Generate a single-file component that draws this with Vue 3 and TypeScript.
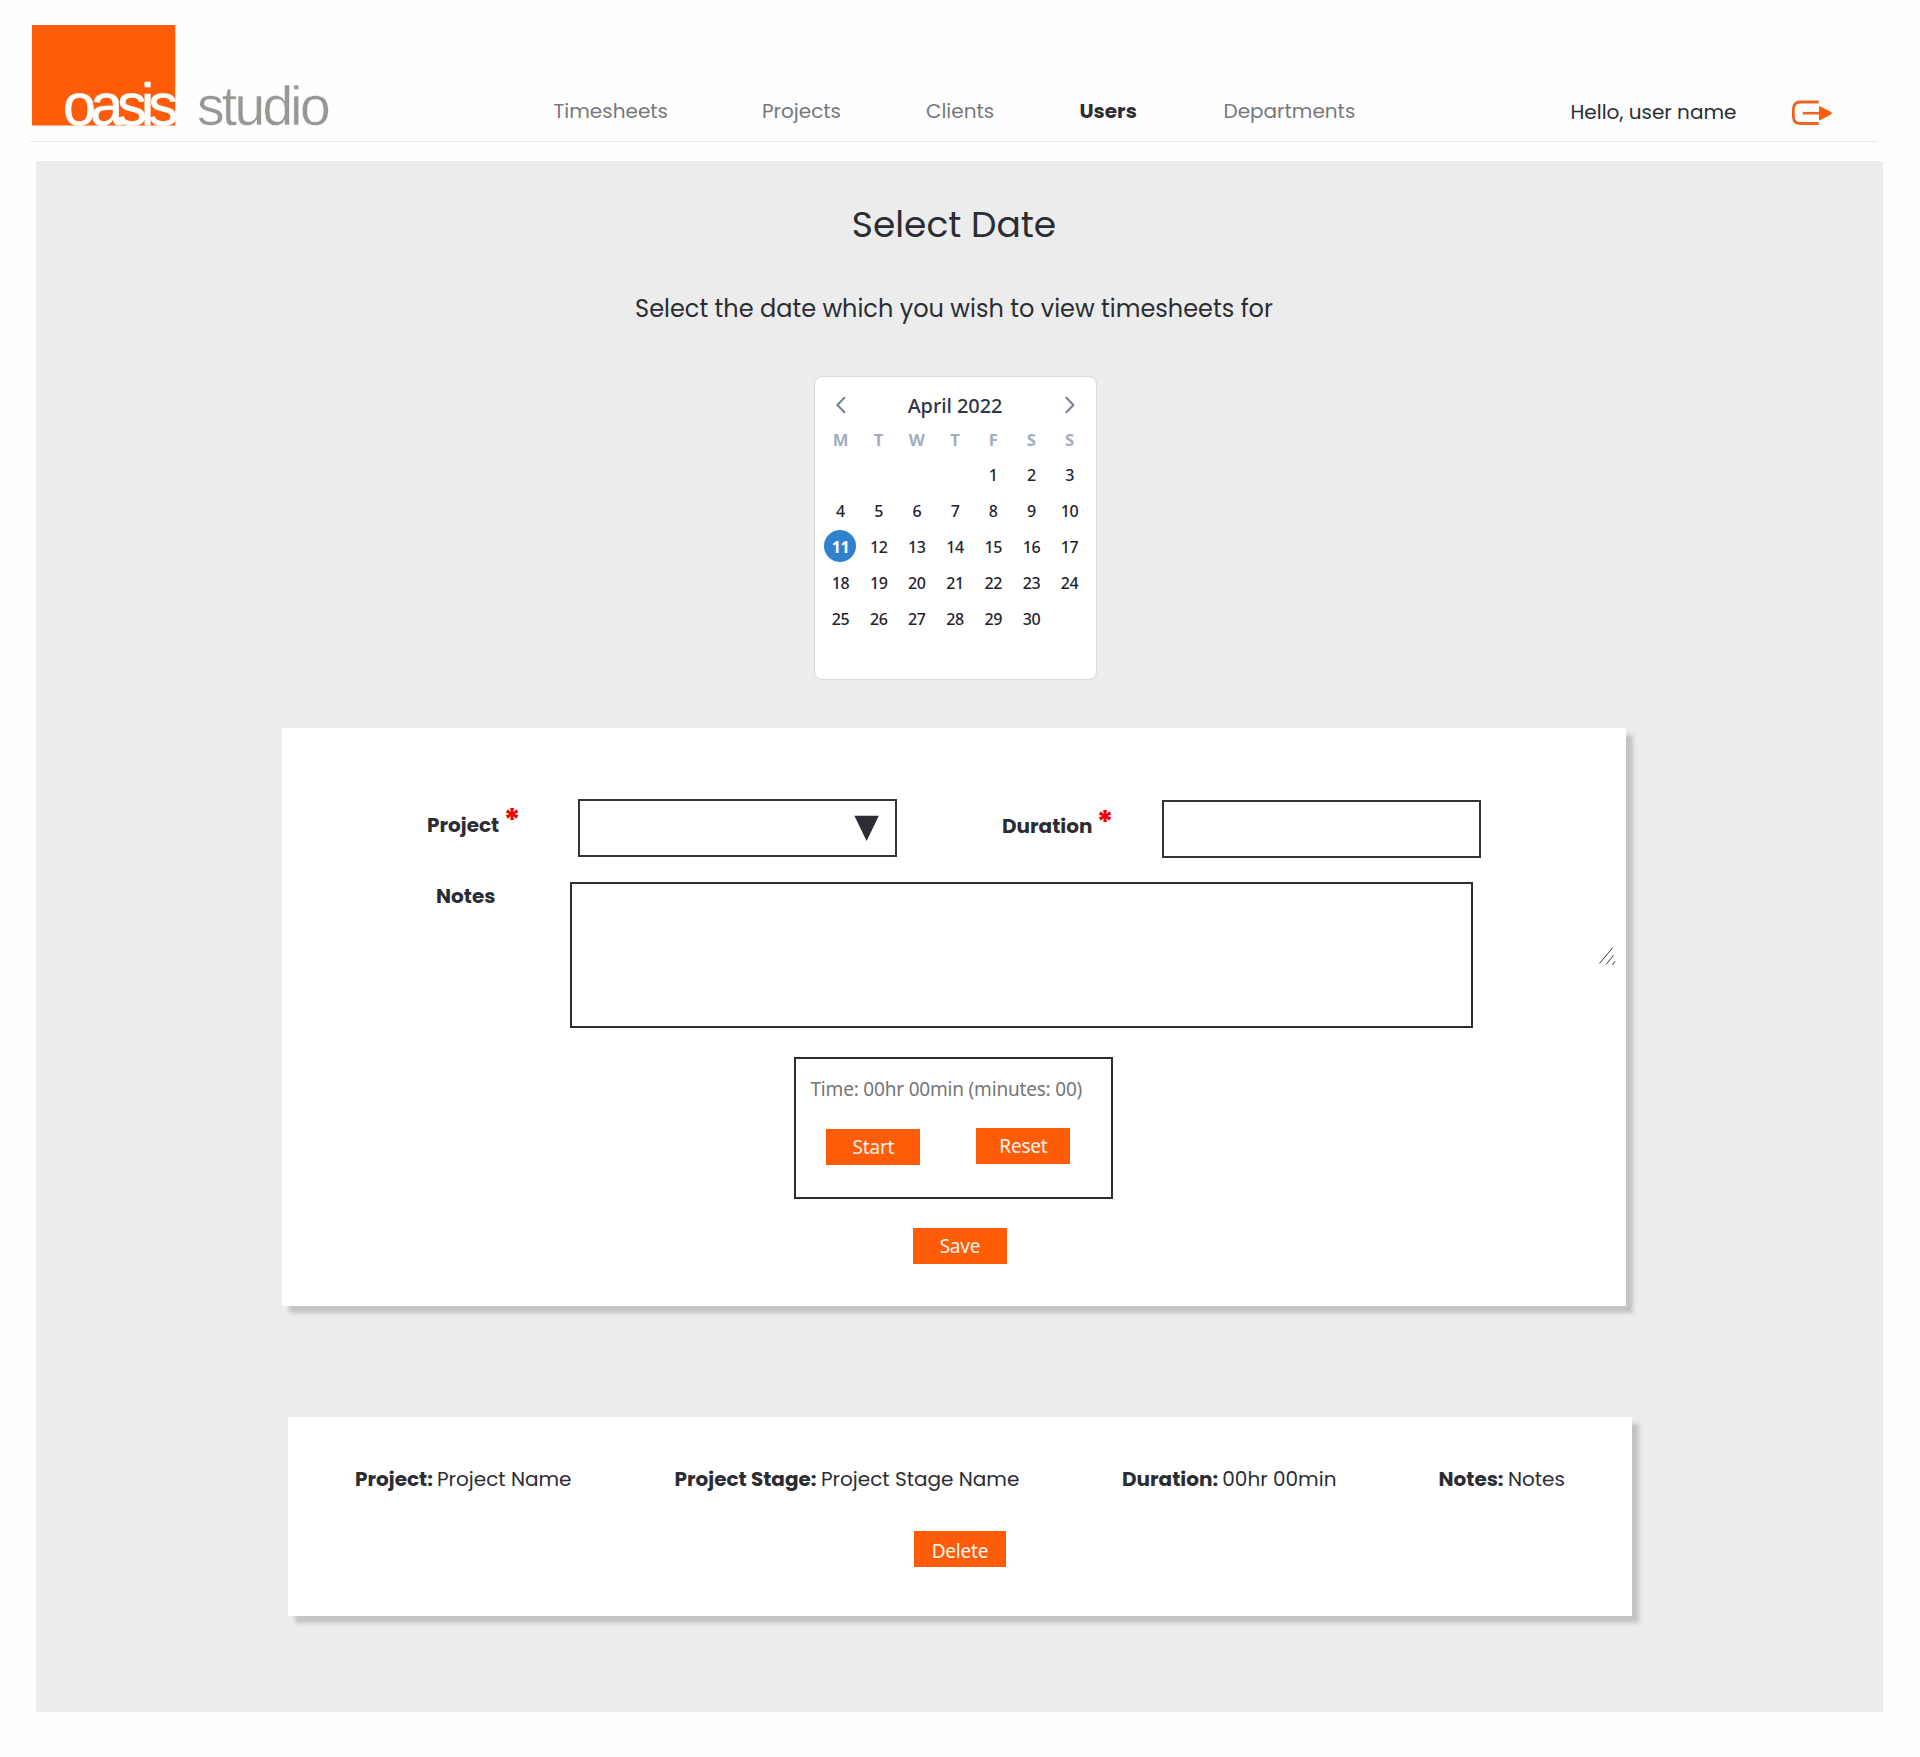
<script setup lang="ts">
interface NavItem { label: string; key: string; active?: boolean }
interface EntryField { name: string; value: string; key: string }

const nav: NavItem[] = [
  { label: 'Timesheets', key: 'timesheets' },
  { label: 'Projects', key: 'projects' },
  { label: 'Clients', key: 'clients' },
  { label: 'Users', key: 'users', active: true },
  { label: 'Departments', key: 'departments' },
]

const weekdays = ['M', 'T', 'W', 'T', 'F', 'S', 'S']
const selectedDay = 11
const leadingBlanks = 4
const days: (number | null)[] = [
  ...Array<null>(leadingBlanks).fill(null),
  ...Array.from({ length: 30 }, (_, i) => i + 1),
]

const entry: EntryField[] = [
  { name: 'Project:', value: 'Project Name', key: 'project' },
  { name: 'Project Stage:', value: 'Project Stage Name', key: 'stage' },
  { name: 'Duration:', value: '00hr 00min', key: 'duration' },
  { name: 'Notes:', value: 'Notes', key: 'notes' },
]
</script>

<template>
  <div class="page">
    <header class="header">
      <svg class="logo" width="310" height="141" viewBox="30 0 310 141">
        <rect x="32" y="25" width="143.3" height="100.5" fill="#ff5c0a" />
        <text class="logo-oasis" x="63" y="125.4" textLength="115" lengthAdjust="spacing">oasis</text>
        <text class="logo-studio" x="197" y="125.4" textLength="133.5" lengthAdjust="spacing">studio</text>
      </svg>
      <nav class="nav">
        <a v-for="n in nav" :key="n.key" class="nav-link" :class="{ active: n.active }">{{ n.label }}</a>
      </nav>
      <span class="hello">Hello, user name</span>
      <svg class="logout" width="44" height="30" viewBox="0 0 44 30">
        <path d="M28.8 4H10.5Q3.4 4 3.4 11.1V18.4Q3.4 25.5 10.5 25.5H28.8" fill="none" stroke="#ee6420" stroke-width="2.8" />
        <path d="M12.8 15.2H30" stroke="#ee6420" stroke-width="2.6" />
        <path d="M29.5 8.6L41 14.4Q41.8 15.2 41 16L29.5 22Z" fill="#ff5c0a" stroke="#ff5c0a" stroke-width="1" stroke-linejoin="round" />
      </svg>
    </header>

    <main class="panel">
      <div class="content">
        <h1 class="title">Select Date</h1>
        <p class="subtitle">Select the date which you wish to view timesheets for</p>

        <section class="calendar">
          <div class="cal-head">
            <svg width="12" height="18" viewBox="0 0 12 18"><path d="M9.4 1.8L2.4 9L9.4 16.2" /></svg>
            <span class="cal-title">April 2022</span>
            <svg width="12" height="18" viewBox="0 0 12 18"><path d="M2.4 1.8L9.4 9L2.4 16.2" /></svg>
          </div>
          <div class="cal-grid weekdays">
            <span v-for="(w, i) in weekdays" :key="i">{{ w }}</span>
          </div>
          <div class="cal-grid days">
            <span v-for="(d, i) in days" :key="i" :class="{ selected: d === selectedDay }"><em>{{ d ?? '' }}</em></span>
          </div>
        </section>

        <section class="card form">
          <div class="row">
            <label class="label project">Project</label>
            <span class="required">*</span>
            <div class="select">
              <svg width="26" height="26" viewBox="0 0 26 26"><path d="M0.4 0.7H24.8L12.6 25.9Z" fill="#2b2d33" /></svg>
            </div>
            <label class="label duration">Duration</label>
            <span class="required">*</span>
            <div class="input"></div>
          </div>
          <div class="row notes-row">
            <label class="label notes">Notes</label>
            <div class="textarea"></div>
            <svg class="grip" width="18" height="20" viewBox="0 0 18 20">
              <path d="M1.5 17.5L14.6 1.8M8.2 18.3L15.6 9.2M14.4 19L17 15.2" fill="none" stroke="#3c3c3c" stroke-width="1" />
            </svg>
          </div>
          <div class="timer">
            <p class="time">Time: 00hr 00min (minutes: 00)</p>
            <div class="timer-actions">
              <button class="btn start">Start</button>
              <button class="btn reset">Reset</button>
            </div>
          </div>
          <button class="btn save">Save</button>
        </section>

        <section class="card entry">
          <div class="fields">
            <p v-for="f in entry" :key="f.key" class="field" :class="'f-' + f.key">
              <b>{{ f.name }}</b><span>{{ f.value }}</span>
            </p>
          </div>
          <button class="btn delete">Delete</button>
        </section>
      </div>
    </main>
  </div>
</template>

<style>
body { background: #fefefe; }
</style>

<style scoped>
.page {
  width: 1920px;
  height: 1757px;
  overflow: hidden;
  background: #fefefe;
  color: #2b2d33;
  font-family: Poppins, Inter, sans-serif;
  font-size: 20px;
  line-height: 24px;
}
.page * { box-sizing: border-box; }
h1, p { margin: 0; font-weight: 400; }

.header {
  display: flex;
  align-items: flex-start;
  width: 1848px;
  height: 142px;
  margin-left: 30px;
  border-bottom: 1px solid #e9e9e9;
}
.logo { display: block; flex: none; overflow: visible; }
.logo-oasis { font: 59px "Liberation Sans", Arial, sans-serif; fill: #fff; stroke: #fff; stroke-width: 0.7px; }
.logo-studio { font: 55px "Liberation Sans", Arial, sans-serif; fill: #979793; stroke: #fefefe; stroke-width: 0.4px; }
.nav {
  display: grid;
  grid-template-columns: 208.5px 164px 153.5px 144px 347px;
  margin: 99px 0 0 213.5px;
}
.nav-link { color: #77787b; white-space: nowrap; }
.nav-link.active { color: #2b2d33; font-weight: 700; }
.hello { width: 219.5px; margin-top: 100px; white-space: nowrap; }
.logout { margin-top: 98px; }

.panel {
  width: 1846.5px;
  height: 1551px;
  margin: 19px 0 0 36.4px;
  padding-top: 42px;
  background: #ececec;
}
.content { width: 1344px; margin-left: 245.6px; }
.title { font-size: 36px; line-height: 44px; text-align: center; }
.subtitle { margin-top: 47px; font-size: 24px; line-height: 30px; text-align: center; }

.calendar {
  width: 283px;
  height: 304px;
  margin: 52px 0 0 532px;
  padding-top: 20px;
  border: 1px solid #d3dbe2;
  border-radius: 8px;
  background: #fff;
  font-family: "Segoe UI", "Noto Sans", sans-serif;
}
.cal-head { display: flex; justify-content: space-between; align-items: flex-start; height: 25px; padding: 0 20px 0 20px; }
.cal-head svg { fill: none; stroke: #718096; stroke-width: 2; stroke-linecap: round; stroke-linejoin: round; margin-top: -1px; }
.cal-title { font-size: 19.9px; line-height: 26px; margin: -4px 0 0 -1px; font-weight: 500; color: #2d3748; letter-spacing: -0.05px; }
.cal-grid { display: grid; grid-template-columns: repeat(7, 38.2px); margin-left: 6.4px; text-align: center; font-size: 16px; }
.weekdays { height: 35px; line-height: 36px; font-weight: 700; color: #a0aec0; font-size: 16.6px; }
.days { grid-auto-rows: 36px; line-height: 36px; font-weight: 500; color: #1f2430; letter-spacing: -0.4px; }
.days em { font-style: normal; }
.days span { display: flex; align-items: center; justify-content: center; }
.days .selected em {
  width: 32px;
  height: 32px;
  border-radius: 50%;
  background: #3182ce;
  color: #fff;
  font-weight: 700;
  line-height: 34px;
  margin-top: -2px;
  text-align: center;
}

.card { width: 1344px; background: #fff; box-shadow: 7px 7px 4px #c3c3c3; }
.form { height: 578px; margin-top: 48px; padding-top: 71px; }
.row { display: flex; align-items: flex-start; height: 60px; }
.label { font-weight: 700; white-space: nowrap; }
.label.project { width: 76.5px; margin: 14px 0 0 145px; }
.label.duration { width: 94.5px; margin: 15px 0 0 105px; }
.label.notes { width: 134px; margin: 2px 0 0 154px; }
.required { width: 16px; margin-top: 9px; color: #f20000; font-size: 32px; font-weight: 700; line-height: 24px; }
.select, .input { width: 319px; height: 58px; border: 2px solid #33363a; }
.select { margin-left: 58.5px; padding: 14px 0 0 274px; }
.select svg { display: block; }
.duration + .required { margin-top: 11px; }
.input { margin: 1px 0 0 49.5px; }
.notes-row { height: 146px; margin-top: 23px; }
.textarea { width: 903px; height: 146px; border: 2px solid #2b2d33; }
.grip { margin: 64px 0 0 125px; }
.timer { width: 319px; height: 142px; margin: 29px 0 0 512px; padding-top: 17px; border: 2px solid #2b2d33; }
.time {
  margin-left: 14.5px;
  font: 19px/26px "Segoe UI", "Noto Sans", sans-serif;
  letter-spacing: -0.19px;
  color: #767676;
  white-space: nowrap;
}
.timer-actions { display: flex; align-items: flex-start; margin: 26px 0 0 30.4px; }
.btn {
  display: block;
  width: 94px;
  height: 36px;
  padding: 0;
  border: 0;
  background: #ff5c0a;
  color: #fff3ea;
  font: 19px/36px "Segoe UI", "Noto Sans", sans-serif;
  letter-spacing: -0.2px;
}
.start { margin-top: 1px; }
.reset { margin-left: 56px; }
.save { margin: 29px 0 0 631px; }

.entry { height: 199px; margin: 111px 0 0 6px; padding-top: 50px; }
.fields { display: grid; grid-template-columns: 319.5px 447.5px 316.5px 180px; margin-left: 67px; }
.field { display: flex; white-space: nowrap; }
.field b { font-weight: 700; }
.f-project b { width: 82px; }
.f-stage b { width: 146.5px; }
.f-duration b { width: 100.3px; }
.f-notes b { width: 69.5px; }
.delete { width: 92px; margin: 40px 0 0 626px; padding-top: 2px; }
</style>
